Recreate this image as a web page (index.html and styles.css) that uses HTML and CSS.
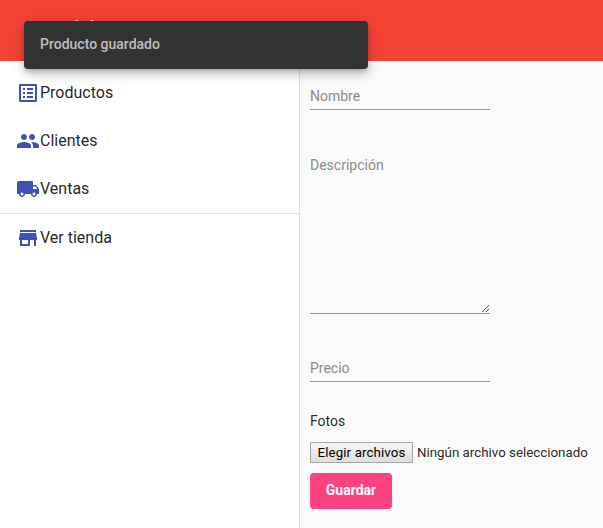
FILE: index.html
```
<!DOCTYPE html>
<html lang="es">
<head>
<meta charset="utf-8">
<title>Productos</title>
<link rel="stylesheet" href="styles.css">
</head>
<body>
<header class="toolbar"><span class="brand">servicio</span></header>
<div class="layout">
  <nav class="sidebar">
    <a class="item"><svg class="icon" viewBox="0 0 24 24"><path d="M19 5v14H5V5h14m1.1-2H3.9c-.5 0-.9.4-.9.9v16.2c0 .4.4.9.9.9h16.2c.4 0 .9-.5.9-.9V3.9c0-.5-.5-.9-.9-.9zM11 7h6v2h-6V7zm0 4h6v2h-6v-2zm0 4h6v2h-6zM7 7h2v2H7zm0 4h2v2H7zm0 4h2v2H7z"/></svg><span class="text">Productos</span></a>
    <a class="item"><svg class="icon" viewBox="0 0 24 24"><path d="M16 11c1.66 0 2.99-1.34 2.99-3S17.66 5 16 5s-3 1.34-3 3 1.34 3 3 3zm-8 0c1.66 0 2.99-1.34 2.99-3S9.66 5 8 5 5 6.34 5 8s1.34 3 3 3zm0 2c-2.33 0-7 1.17-7 3.5V19h14v-2.5c0-2.33-4.67-3.5-7-3.5zm8 0c-.29 0-.62.02-.97.05 1.16.84 1.97 1.97 1.97 3.45V19h6v-2.5c0-2.33-4.67-3.5-7-3.5z"/></svg><span class="text">Clientes</span></a>
    <a class="item"><svg class="icon" viewBox="0 0 24 24"><path d="M20 8h-3V4H3c-1.1 0-2 .9-2 2v11h2c0 1.66 1.34 3 3 3s3-1.34 3-3h6c0 1.66 1.34 3 3 3s3-1.34 3-3h2v-5l-3-4zM6 18.5c-.83 0-1.5-.67-1.5-1.5s.67-1.5 1.5-1.5 1.5.67 1.5 1.5-.67 1.5-1.5 1.5zm13.5-9l1.96 2.5H17V9.5h2.5zm-1.5 9c-.83 0-1.5-.67-1.5-1.5s.67-1.5 1.5-1.5 1.5.67 1.5 1.5-.67 1.5-1.5 1.5z"/></svg><span class="text">Ventas</span></a>
    <hr class="divider">
    <a class="item"><svg class="icon" viewBox="0 0 24 24"><path d="M20 4H4v2h16V4zm1 10v-2l-1-5H4l-1 5v2h1v6h10v-6h4v6h2v-6h1zm-9 4H6v-4h6v4z"/></svg><span class="text">Ver tienda</span></a>
  </nav>
  <main class="content">
    <input class="field name" placeholder="Nombre">
    <textarea class="field description" placeholder="Descripción"></textarea>
    <input class="field price" placeholder="Precio">
    <div class="label">Fotos</div>
    <div class="files"><button class="choose">Elegir archivos</button><span>Ningún archivo seleccionado</span></div>
    <button class="save">Guardar</button>
  </main>
</div>
<div class="snackbar">Producto guardado</div>
</body>
</html>
```
FILE: styles.css
```
* { box-sizing: border-box; }
body { margin: 0; height: 528px; overflow: hidden; background: #fafafa; font-family: Roboto, sans-serif; color: rgba(0,0,0,.87); }
.toolbar { height: 61px; background: #f44336; color: #fff; padding: 16px 36px; font-size: 20px; line-height: 24px; font-weight: 500; }
.layout { display: flex; height: 467px; }
.sidebar { width: 300px; flex: none; background: #fff; border-right: 1px solid #e0e0e0; padding-top: 8px; }
.item { display: flex; align-items: center; height: 48px; padding-left: 16px; font-size: 16px; }
.text { padding-bottom: 2px; }
.icon { width: 24px; height: 24px; fill: #3f51b5; flex: none; }
.divider { margin: 0; border: 0; border-top: 1px solid #e0e0e0; }
.content { padding: 24px 0 0 10px; display: flex; flex-direction: column; align-items: flex-start; }
.field { display: block; width: 180px; margin: 0; border: 0; border-bottom: 1px solid #949494; border-radius: 0; background: transparent; padding: 0; font: 14px/20px Roboto, sans-serif; outline: 0; }
.field::placeholder { color: #8c8c8c; opacity: 1; }
.name { height: 25px; padding-bottom: 2px; }
.description { height: 159px; margin-top: 45px; padding-bottom: 3px; }
.price { height: 25px; margin-top: 43px; padding-bottom: 2px; }
.label { margin-top: 31px; font-size: 14px; line-height: 16px; }
.files { display: flex; align-items: center; margin-top: 13px; height: 21px; font-size: 13.333px; gap: 4px; white-space: nowrap; }
.choose { width: 103px; height: 21px; padding: 0; border: 1px solid #a5a5a5; border-radius: 0; background: linear-gradient(#f6f6f6, #dedede); color: #000; font: 13.333px Roboto, sans-serif; letter-spacing: .1px; }
.save { margin-top: 10px; width: 82px; height: 36px; padding: 0 0 2px; border: 0; border-radius: 4px; background: #ff4081; color: #fff; font: 700 14px Roboto, sans-serif; }
.snackbar { position: absolute; left: 24px; top: 21px; width: 344px; height: 48px; padding: 0 16px; border-radius: 4px; background: #323232; color: rgba(255,255,255,.7); font-size: 14px; font-weight: 500; line-height: 47px; box-shadow: 0 3px 5px -1px rgba(0,0,0,.2), 0 6px 10px rgba(0,0,0,.14), 0 1px 18px rgba(0,0,0,.12); }
```
